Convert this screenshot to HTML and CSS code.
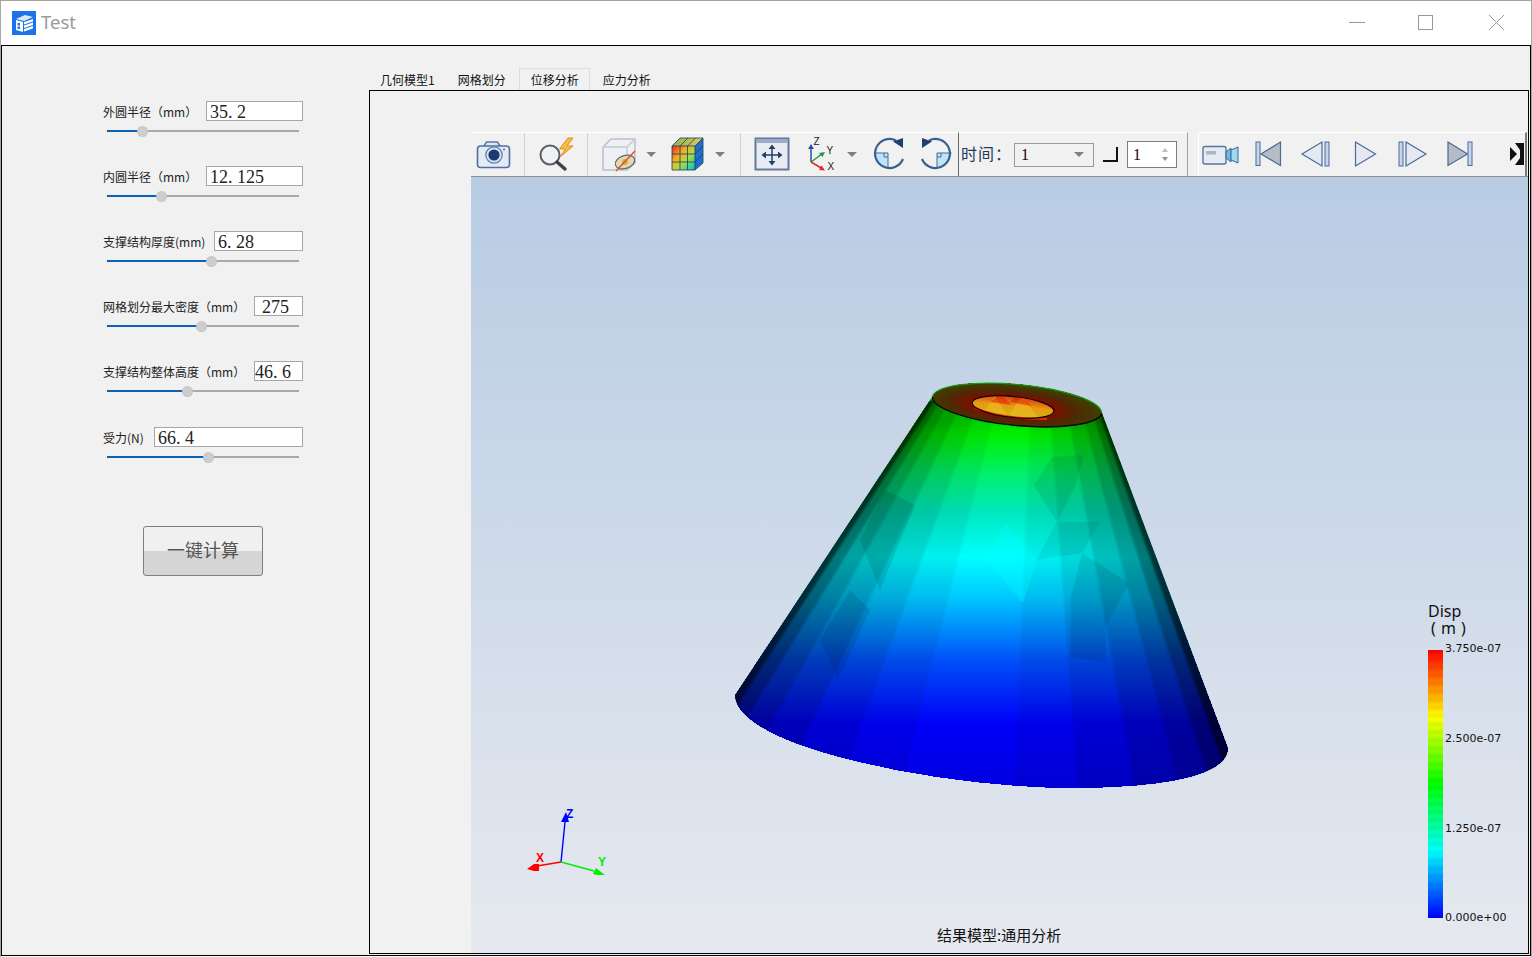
FILE: index.html
```html
<!DOCTYPE html>
<html lang="zh-CN">
<head>
<meta charset="utf-8">
<title>Test</title>
<link rel="stylesheet" href="styles.css">
</head>
<body>
<div class="window">
  <header class="titlebar">
    <svg class="logo" width="24" height="24" viewBox="0 0 24 24">
      <rect width="24" height="24" fill="#1a73e8"/>
      <path d="M4 8 L13 4 L21 6 L12 10 Z" fill="#dbe9fb"/>
      <path d="M4 9 L11 11 V21 L4 19 Z" fill="#fff"/>
      <path d="M12 11 L21 8 V10.5 L12 13.5 Z M12 14.5 L21 11.5 V14 L12 17 Z M12 18 L21 15 V17.5 L12 20.5 Z" fill="#fff"/>
      <rect x="5.5" y="12" width="2.5" height="2.5" fill="#1a73e8"/>
      <rect x="5.5" y="15.5" width="2.5" height="2.5" fill="#1a73e8"/>
    </svg>
    <span class="app-title">Test</span>
    <div class="win-controls">
      <svg width="70" height="44" viewBox="0 0 70 44"><path d="M27 21.5 H43" stroke="#999" fill="none"/></svg>
      <svg width="70" height="44" viewBox="0 0 70 44"><rect x="26.5" y="14.5" width="14" height="14" stroke="#999" fill="none"/></svg>
      <svg width="70" height="44" viewBox="0 0 70 44"><path d="M27 14 L42 29 M42 14 L27 29" stroke="#999" fill="none"/></svg>
    </div>
  </header>

  <main class="main">
    <aside class="form">
      <div class="field">
        <div class="field-top"><label class="field-label">外圆半径（mm）</label><div class="num w97">35. 2</div></div>
        <div class="slider"><div class="fill" style="width:35px"></div><div class="thumb"></div></div>
      </div>
      <div class="field">
        <div class="field-top"><label class="field-label">内圆半径（mm）</label><div class="num w97">12. 125</div></div>
        <div class="slider"><div class="fill" style="width:54px"></div><div class="thumb"></div></div>
      </div>
      <div class="field">
        <div class="field-top"><label class="field-label">支撑结构厚度(mm)</label><div class="num w89">6. 28</div></div>
        <div class="slider"><div class="fill" style="width:104px"></div><div class="thumb"></div></div>
      </div>
      <div class="field">
        <div class="field-top"><label class="field-label">网格划分最大密度（mm）</label><div class="num w49 in7">275</div></div>
        <div class="slider"><div class="fill" style="width:94px"></div><div class="thumb"></div></div>
      </div>
      <div class="field field-wide">
        <div class="field-top"><label class="field-label">支撑结构整体高度（mm）</label><div class="num w49 in0">46. 6</div></div>
        <div class="slider"><div class="fill" style="width:80px"></div><div class="thumb"></div></div>
      </div>
      <div class="field">
        <div class="field-top"><label class="field-label">受力(N)</label><div class="num w149">66. 4</div></div>
        <div class="slider"><div class="fill" style="width:101px"></div><div class="thumb"></div></div>
      </div>
      <button class="calc" type="button">一键计算</button>
    </aside>

    <section class="workspace">
      <nav class="tabs">
        <span class="tab tab-first">几何模型1</span>
        <span class="tab">网格划分</span>
        <span class="tab active">位移分析</span>
        <span class="tab">应力分析</span>
      </nav>
      <div class="pane">
        <div class="viewer">
          <div class="toolbar">
            <div class="tb tb1">
              <svg class="tool sep" width="53" height="43" viewBox="471 133 53 43">
                <path d="M484 146 l2.5-4 h11 l2.5 4" fill="#dfe7f3" stroke="#5b7aa6" stroke-width="1.5"/>
                <rect x="477.5" y="146" width="32" height="21.5" rx="3" fill="#e3eaf5" stroke="#4f6f9f" stroke-width="1.6"/>
                <circle cx="494" cy="155" r="8.2" fill="#d6e1f1" stroke="#5f7fab" stroke-width="1.2"/>
                <circle cx="494" cy="155" r="5.6" fill="#1c3a70"/>
                <circle cx="504" cy="149.5" r="1" fill="#4f6f9f"/>
              </svg>
              <svg class="tool sep" width="62" height="43" viewBox="525 133 62 43">
                <circle cx="550" cy="155" r="9.5" fill="#eef1f5" stroke="#5a5f66" stroke-width="2"/>
                <path d="M557 162 L565 169" stroke="#3d4248" stroke-width="3.4" stroke-linecap="round"/>
                <path d="M568 138 L559.5 149 H565.5 L560 157 L573 146 H567 L573 138 Z" fill="#f7bd45" stroke="#e08c18"/>
              </svg>
              <svg class="tool" width="72" height="43" viewBox="588 133 72 43">
                <path d="M603 147 L611 139 H635 V163 L627 170 H603 Z" fill="#eef0f4" stroke="#b9c0cb" stroke-width="1.5"/>
                <path d="M603 147 H627 V170 M627 147 L635 139" fill="none" stroke="#c4cad4" stroke-width="1.5"/>
                <ellipse cx="625" cy="162" rx="10" ry="6.5" fill="#e8d8a8" stroke="#5a6a7a" stroke-width="1.2" transform="rotate(-18 625 162)"/>
                <circle cx="625" cy="162" r="3" fill="#d6ac5c"/>
                <path d="M616 171 L635 151" stroke="#d5562a" stroke-width="1.5"/>
                <path d="M646.5 152 H656 L651.2 157 Z" fill="#808080"/>
              </svg>
              <svg class="tool sep" width="80" height="43" viewBox="660 133 80 43">
                <defs>
                  <linearGradient id="cubeFace" x1="0" y1="0" x2="1" y2="1">
                    <stop offset="0" stop-color="#e8281e"/>
                    <stop offset=".35" stop-color="#f4b020"/>
                    <stop offset=".6" stop-color="#a8dc48"/>
                    <stop offset=".85" stop-color="#30d0a0"/>
                    <stop offset="1" stop-color="#20a0e8"/>
                  </linearGradient>
                  <linearGradient id="cubeTop" x1="0" y1="0" x2="1" y2="0">
                    <stop offset="0" stop-color="#88b848"/>
                    <stop offset="1" stop-color="#e8c468"/>
                  </linearGradient>
                </defs>
                <path d="M672 146 L680 138 H703 L695 146 Z" fill="url(#cubeTop)"/>
                <path d="M695 146 L703 138 V163 L695 170 Z" fill="#1f6fc8"/>
                <rect x="672" y="146" width="23" height="24" fill="url(#cubeFace)"/>
                <path d="M680 146 V170 M687.500 146 V170 M672 154 H695 M672 162 H695 M672 146 H695 V170 H672 Z M695 146 L703 138 M695 154 L703 146 M695 162 L703 154 M680 146 L688 138 M687.500 146 L695.500 138 M672 146 L680 138 H703 V163 L695 170" fill="none" stroke="#1e3a5f" stroke-width=".8"/>
                <path d="M715 152 H725 L720 157 Z" fill="#808080"/>
              </svg>
              <svg class="tool" width="54" height="43" viewBox="741 133 54 43">
                <rect x="755.500" y="138.500" width="33" height="31" fill="#e9edf3" stroke="#64799e" stroke-width="2"/>
                <rect x="756" y="139" width="32" height="4" fill="#9aacca"/>
                <path d="M772 147 V163 M764 155 H780" stroke="#22406a" stroke-width="1.500"/>
                <path d="M772 144.500 l-3.500 4.500 h7 Z M772 165.500 l-3.500-4.500 h7 Z M761.500 155 l4.500-3.500 v7 Z M782.500 155 l-4.500-3.500 v7 Z" fill="#22406a"/>
              </svg>
              <svg class="tool" width="67" height="43" viewBox="795 133 67 43">
                <path d="M811 162 V147" stroke="#2a4fa8" stroke-width="1.500"/>
                <path d="M811 144 l-3 5 h6 Z" fill="#2a4fa8"/>
                <path d="M811 162 L822 154" stroke="#1f9a4a" stroke-width="1.500"/>
                <path d="M825 152 l-6 1 3.500 4 Z" fill="#1f9a4a"/>
                <path d="M811 162 L822 168.500" stroke="#e02828" stroke-width="1.500"/>
                <path d="M825 170.500 l-6-.5 2.500-4.500 Z" fill="#e02828"/>
                <text class="axis-mini" x="813.500" y="145">Z</text>
                <text class="axis-mini" x="826.500" y="154">Y</text>
                <text class="axis-mini" x="827.500" y="170">X</text>
                <path d="M847 152 H857 L852 157 Z" fill="#808080"/>
              </svg>
              <svg class="tool" width="50" height="43" viewBox="862 133 50 43">
                <path d="M888 153 H874 A14.500 14.500 0 0 0 888 167.500 Z" fill="#bfe3f7"/>
                <path d="M874 153 H888 V167.500 M884 153 V157 H888" fill="none" stroke="#3f6a9c" stroke-width="1"/>
                <path d="M896 140.500 A14.500 14.500 0 1 0 903 159" fill="none" stroke="#3a6090" stroke-width="2.200"/>
                <path d="M893 141.500 L903 138 V148 Z" fill="#1e3f70"/>
              </svg>
              <svg class="tool" width="46" height="43" viewBox="912 133 46 43">
                <path d="M937 153 H951.500 A14.500 14.500 0 0 1 937 167.500 Z" fill="#bfe3f7"/>
                <path d="M951.500 153 H937 V167.500 M941 153 V157 H937" fill="none" stroke="#3f6a9c" stroke-width="1"/>
                <path d="M929 140.500 A14.500 14.500 0 1 1 922 159" fill="none" stroke="#3a6090" stroke-width="2.200"/>
                <path d="M932 141.500 L922 138 V148 Z" fill="#1e3f70"/>
              </svg>
            </div>
            <div class="tb tb2">
              <span class="time-label">时间：</span>
              <div class="combo"><span class="serif-val">1</span><span class="combo-arrow"></span></div>
              <div class="corner"></div>
              <div class="spin"><span class="serif-val">1</span><span class="spin-arrows"><i class="up"></i><i class="down"></i></span></div>
            </div>
            <div class="tb tb3">
              <svg class="tool" width="48" height="43" viewBox="1199 133 48 43">
                <rect x="1203" y="146.500" width="23" height="17.500" rx="2" fill="#e6ebf3" stroke="#56769f" stroke-width="1.400"/>
                <rect x="1206" y="151" width="10" height="3.500" fill="#aeb6c2"/>
                <path d="M1226 152 L1231 148 V162 L1226 158 Z" fill="#6fb8e0" stroke="#3a6a9a"/>
                <path d="M1231 150 L1238 147 V163 L1231 160 Z" fill="#a6d6ef" stroke="#3a6a9a"/>
              </svg>
              <svg class="tool" width="45" height="43" viewBox="1247 133 45 43">
                <rect x="1256" y="142" width="4" height="23.500" fill="#c9d6ea" stroke="#4a6a9a"/>
                <path d="M1261 154 L1280.500 142 V165.500 Z" fill="#b6bcc6" stroke="#4a6a9a" stroke-width="1.200"/>
              </svg>
              <svg class="tool" width="49" height="43" viewBox="1292 133 49 43">
                <path d="M1302 154 L1322 142 V166 Z" fill="#e4e9f1" stroke="#4a6a9a" stroke-width="1.200"/>
                <rect x="1325" y="142" width="4" height="24" fill="#c9d6ea" stroke="#4a6a9a"/>
              </svg>
              <svg class="tool" width="47" height="43" viewBox="1341 133 47 43">
                <path d="M1355.500 142 L1375.500 154 L1355.500 166 Z" fill="#e4e9f1" stroke="#4a6a9a" stroke-width="1.200"/>
              </svg>
              <svg class="tool" width="49" height="43" viewBox="1388 133 49 43">
                <rect x="1399" y="142" width="4" height="24" fill="#c9d6ea" stroke="#4a6a9a"/>
                <path d="M1406 142 L1426 154 L1406 166 Z" fill="#e4e9f1" stroke="#4a6a9a" stroke-width="1.200"/>
              </svg>
              <svg class="tool" width="53" height="43" viewBox="1437 133 53 43">
                <path d="M1448 142 L1467.500 154 L1448 165.500 Z" fill="#b6bcc6" stroke="#4a6a9a" stroke-width="1.200"/>
                <rect x="1468" y="142" width="4" height="23.500" fill="#c9d6ea" stroke="#4a6a9a"/>
              </svg>
              <svg class="tool" width="35" height="43" viewBox="1490 133 35 43">
                <path d="M1515 143 H1524 V165 H1515 L1520 158 V150 Z" fill="#111"/>
                <path d="M1510 147 L1517 154 L1510 161 Z" fill="#111"/>
              </svg>
            </div>
          </div>

          <div class="canvas">
            <svg class="scene" width="1057" height="776" viewBox="471 177 1057 776">
              <defs>
                <linearGradient id="heat" gradientUnits="userSpaceOnUse" x1="0" y1="420" x2="0" y2="790">
                  <stop offset="0" stop-color="#00d800"/>
                  <stop offset=".04" stop-color="#00f000"/>
                  <stop offset=".14" stop-color="#00f068"/>
                  <stop offset=".25" stop-color="#00e8c0"/>
                  <stop offset=".37" stop-color="#00ffff"/>
                  <stop offset=".48" stop-color="#00c8ff"/>
                  <stop offset=".65" stop-color="#0050f8"/>
                  <stop offset=".82" stop-color="#0000f8"/>
                  <stop offset="1" stop-color="#0000e0"/>
                </linearGradient>
                <radialGradient id="rim" cx=".48" cy=".55" r=".52">
                  <stop offset="0" stop-color="#8a0c00"/>
                  <stop offset=".5" stop-color="#7a1000"/>
                  <stop offset=".72" stop-color="#4e2a04"/>
                  <stop offset="1" stop-color="#3e4000"/>
                </radialGradient>
                <linearGradient id="core" x1="0" y1="0" x2="0" y2="1">
                  <stop offset="0" stop-color="#d83a10"/>
                  <stop offset=".45" stop-color="#e89a10"/>
                  <stop offset="1" stop-color="#c8b418"/>
                </linearGradient>
                <clipPath id="bodyClip">
                  <path d="M932 397 L735 695 C735 715 765 732 800 745 C880 773 1000 790 1090 788 C1170 786 1228 775 1228 748 L1102 413 Z"/>
                </clipPath>
                <clipPath id="holeClip">
                  <ellipse cx="1013" cy="407" rx="41" ry="10.500" transform="rotate(6 1013 407)"/>
                </clipPath>
                <filter id="soft" x="-5%" y="-5%" width="110%" height="110%">
                  <feGaussianBlur stdDeviation="1.200"/>
                </filter>
              </defs>

              <path class="crisp" fill="url(#heat)" d="M932 397 L735 695 C735 715 765 732 800 745 C880 773 1000 790 1090 788 C1170 786 1228 775 1228 748 L1102 413 Z"/>

              <g clip-path="url(#bodyClip)">
                <g class="facets" filter="url(#soft)">
                  <polygon fill-opacity=".78" points="920,400 935.300,400 676,800 640,800"/>
                  <polygon fill-opacity=".52" points="935.300,400 941,400 697,800 676,800"/>
                  <polygon fill-opacity=".36" points="941,400 950,400 729,800 697,800"/>
                  <polygon fill-opacity=".25" points="950,400 963,400 775.500,800 729,800"/>
                  <polygon fill-opacity=".14" points="963,400 980,400 834,800 775.500,800"/>
                  <polygon fill-opacity=".06" points="980,400 998,400 898,800 834,800"/>
                  <polygon fill-opacity=".78" points="1110,400 1093.700,400 1236,800 1265,800"/>
                  <polygon fill-opacity=".52" points="1093.700,400 1088,400 1215.500,800 1236,800"/>
                  <polygon fill-opacity=".36" points="1088,400 1079,400 1183,800 1215.500,800"/>
                  <polygon fill-opacity=".25" points="1079,400 1065.600,400 1137,800 1183,800"/>
                  <polygon fill-opacity=".14" points="1065.600,400 1049,400 1078.500,800 1137,800"/>
                  <polygon fill-opacity=".06" points="1049,400 1031,400 1014,800 1078.500,800"/>
                </g>
                <g class="facets">
                  <polygon fill-opacity=".07" points="1057,522 1100,522 1082,553 1036,560"/>
                  <polygon fill-opacity=".09" points="1082,553 1129,583 1105,628 1071,597"/>
                  <polygon fill-opacity=".09" points="1071,597 1105,628 1107,663 1071,657"/>
                  <polygon fill-opacity=".08" points="1052,457 1084,455 1075,487 1057,522 1034,485"/>
                  <polygon fill-opacity=".1" points="860,540 885,490 915,505 880,590"/>
                  <polygon fill-opacity=".1" points="820,640 850,590 870,610 838,680"/>
                </g>
                <polygon fill="#00ffff" fill-opacity=".3" points="1005,523 1037,560 1023,603 986,560"/>
              </g>

              <ellipse class="crisp" fill="url(#rim)" cx="1017" cy="405" rx="85" ry="21" transform="rotate(5.400 1017 405)"/>
              <path class="rim-top" d="M932.400 397 A85 21 5.400 0 1 1101.600 413"/>
              <path class="rim-front" d="M932.400 397 A85 21 5.400 0 0 1101.600 413"/>
              <ellipse fill="url(#core)" cx="1013" cy="407" rx="41" ry="10.500" transform="rotate(6 1013 407)"/>
              <g clip-path="url(#holeClip)">
                <path fill="#f0c020" fill-opacity=".55" d="M995 396 L1010 420 L980 416 Z M1022 396 L1040 420 L1005 420 Z"/>
                <path fill="#e02808" fill-opacity=".6" d="M1000 394 L1012 405 L990 402 Z M1018 394 L1032 406 L1010 402 Z"/>
              </g>
              <path class="hole-red" d="M975 408 Q1000 419 1047 419"/>
              <ellipse class="hole-edge" cx="1013" cy="407" rx="41" ry="10.500" transform="rotate(6 1013 407)"/>

              <g class="triad">
                <path d="M561 862 L565 822" stroke="#0000ff" stroke-width="1.400"/>
                <path d="M566 812 L561 822 H569 Z" fill="#0000ff"/>
                <path d="M561 862 L537 866" stroke="#ff0000" stroke-width="1.400"/>
                <path d="M527 869 L534 864 H539 V871 H534 Z" fill="#ff0000"/>
                <path d="M561 862 L594 871" stroke="#00ee00" stroke-width="1.400"/>
                <path d="M605 875 L596 868 L593 874 L597 875 Z" fill="#00ee00"/>
                <text class="axis-z" x="566" y="818">Z</text>
                <text class="axis-x" x="536" y="862">X</text>
                <text class="axis-y" x="598" y="866">Y</text>
              </g>
            </svg>

            <div class="legend">
              <div class="legend-title">Disp</div>
              <div class="legend-unit">( m )</div>
              <div class="colorbar">
                <span class="tick t0">3.750e-07</span>
                <span class="tick t1">2.500e-07</span>
                <span class="tick t2">1.250e-07</span>
                <span class="tick t3">0.000e+00</span>
              </div>
            </div>
            <div class="caption">结果模型:通用分析</div>
          </div>
        </div>
      </div>
    </section>
  </main>
</div>
</body>
</html>
```

FILE: styles.css
```css
* { box-sizing: border-box; }

html, body {
  margin: 0;
  height: 957px;
  overflow: hidden;
  background: #fff;
}

body {
  font-family: "Noto Sans CJK SC", "Noto Sans", sans-serif;
  color: #222;
}

.window {
  width: 1532px;
  height: 957px;
  display: flex;
  flex-direction: column;
  border-top: 1px solid #a2a2a2;
  border-left: 1px solid #a8a8a8;
  border-right: 1px solid #a8a8a8;
}

/* title bar */
.titlebar {
  flex: none;
  height: 44px;
  display: flex;
  align-items: center;
  padding-left: 11px;
  background: #fff;
}

.logo { flex: none; margin-bottom: 1px; }

.app-title {
  margin: 0 0 2px 5px;
  font: 18.500px/24px "Noto Sans", sans-serif;
  color: #9b9b9b;
}

.win-controls {
  margin-left: auto;
  display: flex;
  margin-right: -1px;
}

.win-controls svg { display: block; }

/* main frame */
.main {
  flex: none;
  height: 911px;
  display: flex;
  border: 1px solid #000;
  background: #f1f1f1;
}

/* left form */
.form {
  flex: none;
  width: 367px;
  padding: 55px 0 0 100px;
  display: flex;
  flex-direction: column;
  align-items: flex-start;
}

.field {
  width: 201px;
  margin-bottom: 29px;
}

.field-wide { margin-bottom: 30px; }

.field-top {
  display: flex;
  align-items: flex-start;
  justify-content: space-between;
  height: 20px;
}

.field-label {
  font-size: 12px;
  line-height: 22px;
  padding-left: 1px;
  white-space: nowrap;
  color: #222;
}

.num {
  flex: none;
  height: 20px;
  padding-left: 3px;
  border: 1px solid #a6a6a6;
  background: #fff;
  font: 18px/20px "Liberation Serif", serif;
  color: #222;
  white-space: nowrap;
  overflow: hidden;
}

.w97 { width: 97px; }
.w89 { width: 89px; }
.w49 { width: 49px; }
.w149 { width: 149px; }
.in7 { padding-left: 7px; }
.in0 { padding-left: 0; }

.slider {
  position: relative;
  height: 12px;
  margin: 4px 4px 0 5px;
  display: flex;
  align-items: center;
}

.slider::before {
  content: "";
  flex: 1;
  height: 2px;
  background: #a9a9a9;
  order: 2;
}

.fill {
  flex: none;
  height: 2px;
  background: #0b63b8;
  order: 1;
}

.thumb {
  order: 1;
  flex: none;
  width: 11px;
  height: 11px;
  margin: 0 -5px;
  position: relative;
  border-radius: 50%;
  background: #cdcdcd;
  border: 1px dotted #bdbdbd;
}

.calc {
  margin: 34px 0 0 41px;
  width: 120px;
  height: 50px;
  padding: 0 0 4px;
  border: 1px solid #7f7f7f;
  border-radius: 3px;
  background: linear-gradient(#f0f0f0 0, #f0f0f0 50%, #d5d5d5 50%, #d5d5d5 100%);
  font: 18px/44px "Noto Sans CJK SC", sans-serif;
  color: #555;
}

/* tabs and pane */
.workspace {
  flex: 1;
  min-width: 0;
  display: flex;
  flex-direction: column;
  margin: 0 1px 1px 0;
}

.tabs {
  flex: none;
  height: 44px;
  padding-top: 22px;
  display: flex;
  gap: 2px;
}

.tab {
  height: 22px;
  padding: 0 11px;
  font-size: 12px;
  line-height: 24px;
  color: #111;
  white-space: nowrap;
}

.tab-first { margin-right: -1px; }

.tab.active {
  background: #f1f1f1;
  border: 1px solid #dcdcdc;
  border-bottom: 0;
  padding: 0 10px 0 11px;
  line-height: 22px;
}

.pane {
  flex: 1;
  min-height: 0;
  border: 1px solid #000;
  padding: 41px 0 0 101px;
  display: flex;
}

.viewer {
  flex: 1;
  min-width: 0;
  display: flex;
  flex-direction: column;
}

/* toolbar */
.toolbar {
  flex: none;
  height: 45px;
  display: flex;
  background: #f1f1f1;
  border-bottom: 1px solid #8d8d8d;
}

.tb {
  display: flex;
  border-top: 1px solid #fff;
  height: 44px;
}

.tool {
  display: block;
  flex: none;
}

.tool.sep { box-sizing: content-box; border-right: 1px solid #d0d0d0; }

.tb1 { width: 488px; border-right: 1px solid #6b6b6b; }

.tb2 {
  width: 229px;
  align-items: center;
  border-right: 1px solid #a0a0a0;
  padding-left: 2px;
}

.tb3 {
  width: 329px;
  margin-left: 10px;
  border-left: 1px solid #fff;
  border-right: 2px solid #7a7a7a;
}

.axis-mini {
  font: 10px "Liberation Sans", sans-serif;
  fill: #222;
}

.time-label {
  flex: none;
  width: 53px;
  margin-bottom: 4px;
  font-size: 16px;
  letter-spacing: 1px;
  white-space: nowrap;
  color: #1c3c60;
}

.combo {
  flex: none;
  width: 80px;
  height: 24px;
  display: flex;
  align-items: center;
  padding: 0 9px 0 6px;
  border: 1px solid #9a9a9a;
  background: #f1f1f1;
}

.serif-val {
  font: 16px/20px "Liberation Serif", serif;
  color: #200;
}

.combo-arrow {
  margin-left: auto;
  width: 0;
  height: 0;
  border-left: 5px solid transparent;
  border-right: 5px solid transparent;
  border-top: 5px solid #808080;
}

.corner {
  flex: none;
  width: 15px;
  height: 15px;
  margin: 0 9px;
  border-right: 2px solid #111;
  border-bottom: 2px solid #111;
}

.spin {
  flex: none;
  width: 50px;
  height: 27px;
  display: flex;
  align-items: center;
  padding-left: 5px;
  border: 1px solid #7f7f7f;
  background: #fff;
}

.spin-arrows {
  margin-left: auto;
  margin-right: 8px;
  display: flex;
  flex-direction: column;
  gap: 5px;
}

.spin-arrows i {
  display: block;
  width: 0;
  height: 0;
  border-left: 3.5px solid transparent;
  border-right: 3.5px solid transparent;
}

.spin-arrows .up { border-bottom: 4px solid #bdbdbd; }
.spin-arrows .down { border-top: 4px solid #909090; }

/* 3D canvas */
.canvas {
  flex: 1;
  min-height: 0;
  position: relative;
  background: linear-gradient(#b8cce4, #e6e9ef);
  overflow: hidden;
}

.scene {
  position: absolute;
  left: 0;
  top: 0;
}

.crisp { shape-rendering: crispEdges; }
.facets polygon { fill: #000; }

.rim-top { fill: none; stroke: #169a16; stroke-width: 1.2; }
.rim-front { fill: none; stroke: #0a0a0a; stroke-width: 1.4; }
.hole-red { fill: none; stroke: #ee2400; stroke-width: 2; }
.hole-edge { fill: none; stroke: #080808; stroke-width: 1.2; }

.axis-z, .axis-x, .axis-y {
  font: bold 12px "Liberation Sans", sans-serif;
}
.axis-z { fill: #0000ff; }
.axis-x { fill: #ff0000; }
.axis-y { fill: #00ee00; }

.legend {
  position: absolute;
  left: 957px;
  top: 425px;
}

.legend-title {
  font: 16px/18px "Noto Sans", sans-serif;
  color: #111;
}

.legend-unit {
  font: 16px/17px "Noto Sans", sans-serif;
  color: #111;
  margin-left: 3px;
  letter-spacing: .5px;
  white-space: pre;
}

.colorbar {
  position: relative;
  width: 15px;
  height: 268px;
  margin-top: 13px;
  background:
    repeating-linear-gradient(rgba(0, 0, 0, .035) 0 4px, transparent 4px 8px),
    linear-gradient(#ff0000 0, #ffff00 25%, #00ff00 50%, #00ffff 75%, #0000ff 100%);
}

.tick {
  position: absolute;
  left: 17px;
  font: 11px/14px "DejaVu Sans", sans-serif;
  color: #111;
  white-space: nowrap;
}

.t0 { top: -8px; }
.t1 { top: 82px; }
.t2 { top: 172px; }
.t3 { top: 261px; }

.caption {
  position: absolute;
  left: 466px;
  bottom: 8px;
  font-size: 15px;
  line-height: 20px;
  color: #111;
  white-space: nowrap;
}
```
